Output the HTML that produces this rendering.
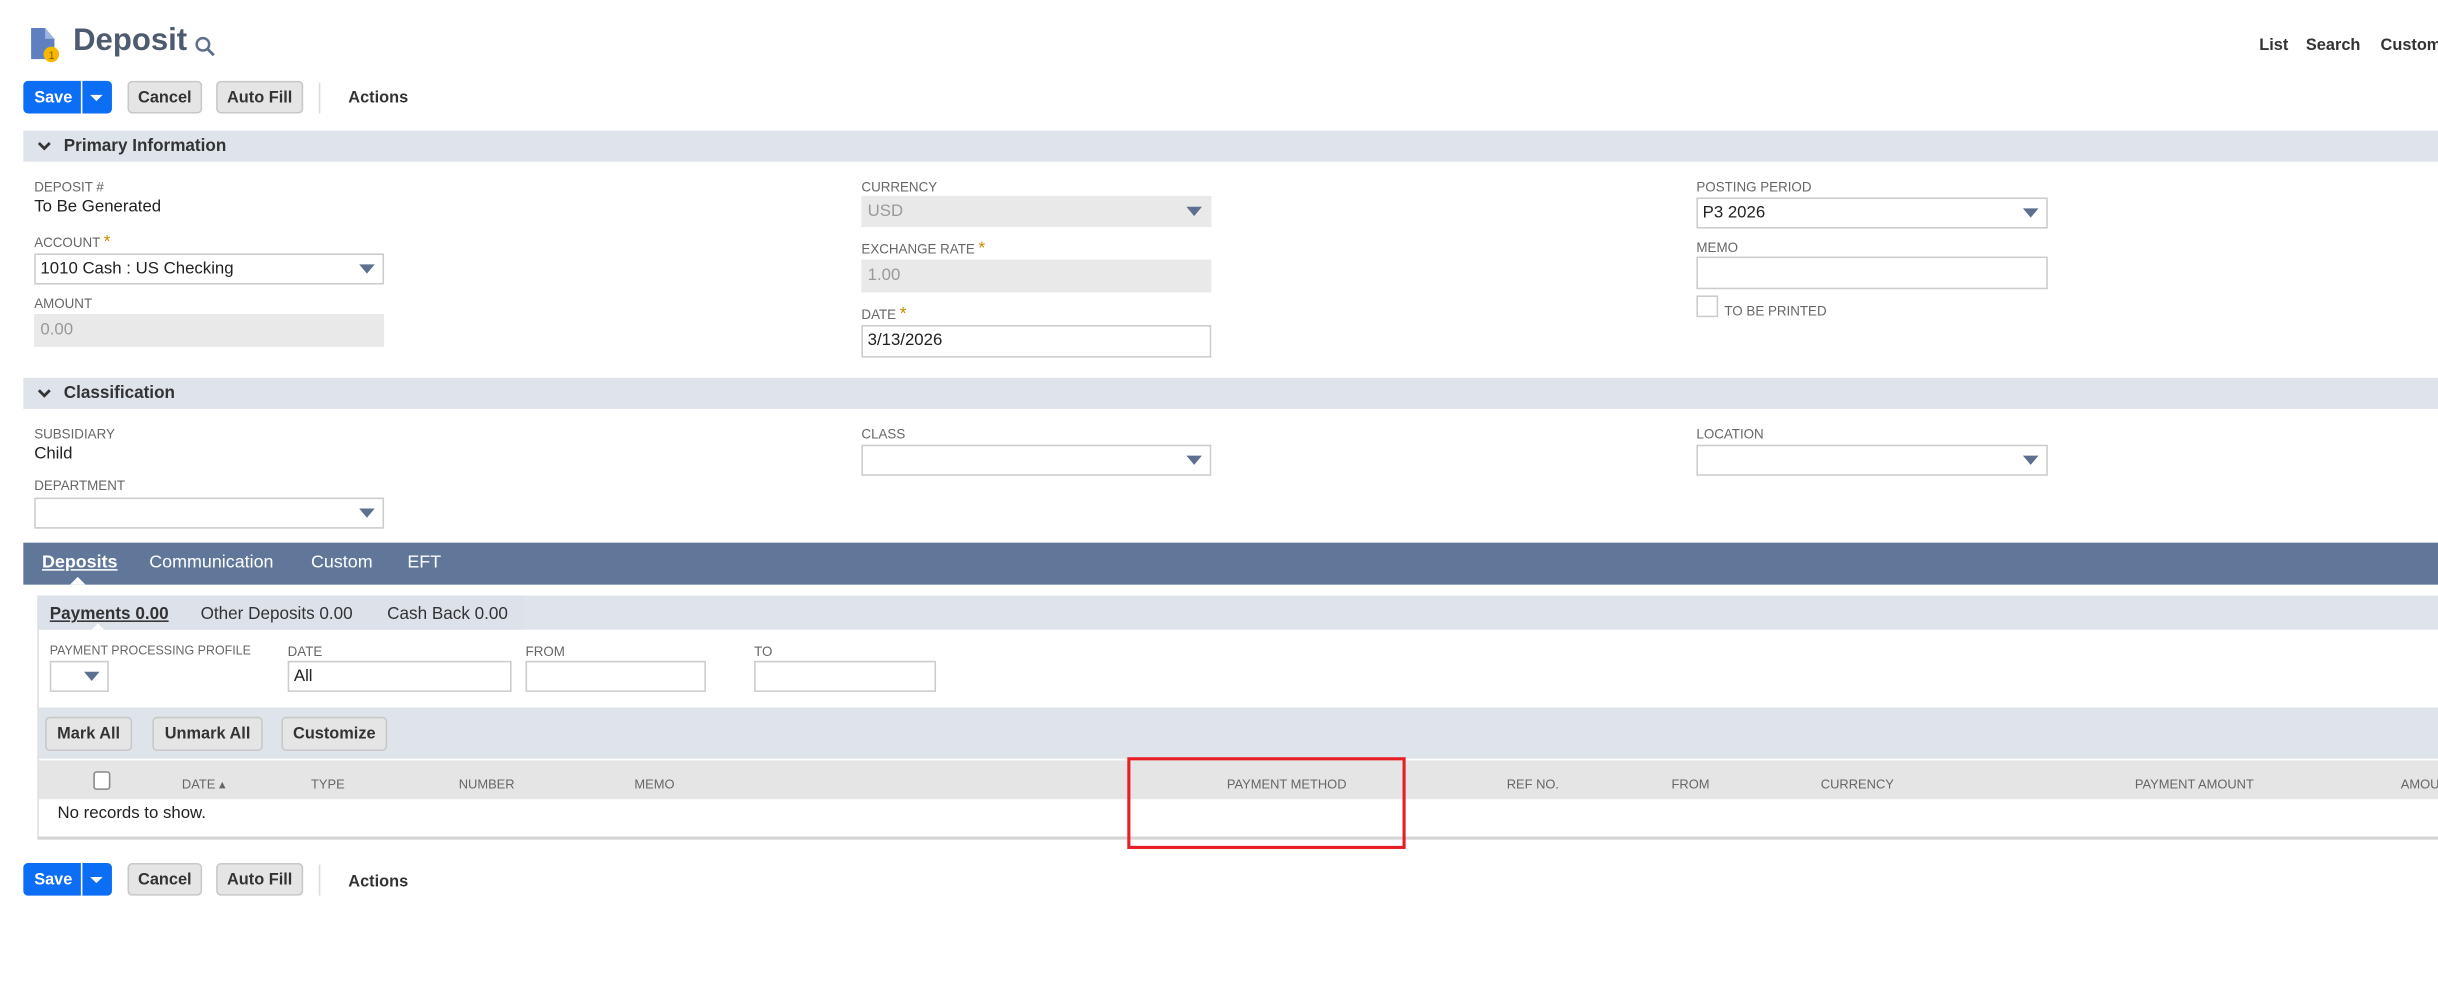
<!DOCTYPE html>
<html><head><meta charset="utf-8"><style>
html,body{margin:0;padding:0;background:#fff;overflow:hidden;width:2438px;height:998px}
#w{position:absolute;left:0;top:0;width:1568px;height:642px;transform:scale(1.5549);transform-origin:0 0;font-family:"Liberation Sans",sans-serif;color:#222}
.a{position:absolute;white-space:nowrap}
.lbl{font-size:8.6px;color:#666;text-transform:uppercase}
.val{font-size:10.8px;color:#222}
.box{position:absolute;border:1px solid #ccc;background:#fff;box-sizing:border-box;font-size:10.8px;line-height:18px;padding-left:3px}
.dis{background:#e9e9e9;border-color:#e9e9e9;color:#999}
.tri{position:absolute;right:5px;top:6px;width:0;height:0;border-left:5px solid transparent;border-right:5px solid transparent;border-top:6px solid #5e7090}
.star{color:#c88a00;font-size:11px}
.btn{position:absolute;height:21px;box-sizing:border-box;border:1px solid #c8c8c8;background:#e5e5e5;border-radius:3px;font-size:10.5px;font-weight:bold;color:#333;line-height:20px;text-align:center}
.save{position:absolute;height:21px;width:57px;background:#0c6df5;border-radius:3px;color:#fff;font-weight:bold;font-size:10.5px}
.bar{position:absolute;left:15px;right:0;height:20px;background:#dfe4eb;font-size:11px;font-weight:bold;color:#333;line-height:20px}
.hd{position:absolute;top:499px;font-size:8.3px;color:#666}
</style></head><body><div id="w">
<svg class="a" style="left:18px;top:16px" width="24" height="25" viewBox="0 0 24 25"><path d="M2 2h9l6 7v13H2z" fill="#5e80c0"/><path d="M11 2l6 7h-6z" fill="#9db4e0"/><circle cx="15" cy="19" r="5" fill="#f5b700"/><text x="13.3" y="22" font-size="7" fill="#8a5c00" font-family="Liberation Sans">1</text></svg>
<div class="a" style="left:47px;top:15px;font-size:20px;font-weight:bold;color:#4d5b70">Deposit</div>
<svg class="a" style="left:125px;top:23px" width="14" height="14" viewBox="0 0 14 14"><circle cx="5.5" cy="5.5" r="4" stroke="#5e6f8a" stroke-width="1.6" fill="none"/><path d="M8.5 8.5l4 4" stroke="#5e6f8a" stroke-width="1.8"/></svg>
<div class="a" style="left:1453px;top:23px;font-size:10.5px;font-weight:bold;color:#333">List</div>
<div class="a" style="left:1483px;top:23px;font-size:10.5px;font-weight:bold;color:#333">Search</div>
<div class="a" style="left:1531px;top:23px;font-size:10.5px;font-weight:bold;color:#333">Customize</div>
<div class="save" style="left:15px;top:52px"><span class="a" style="left:7px;top:5px">Save</span><span class="a" style="left:37px;top:0;width:1px;height:21px;background:#fff"></span><span class="a" style="left:43px;top:9px;border-left:4px solid transparent;border-right:4px solid transparent;border-top:4px solid #fff"></span></div>
<div class="btn" style="left:82px;top:52px;width:48px">Cancel</div>
<div class="btn" style="left:139px;top:52px;width:56px">Auto Fill</div>
<div class="a" style="left:205px;top:53px;width:1px;height:20px;background:#ddd"></div>
<div class="a" style="left:224px;top:57px;font-size:10.5px;font-weight:bold;color:#333">Actions</div>
<div class="bar" style="top:84px"><svg class="a" style="left:9px;top:7px" width="9" height="6"><path d="M1 1l3.5 3.5L8 1" stroke="#333" stroke-width="1.8" fill="none"/></svg><span class="a" style="left:26px">Primary Information</span></div>
<div class="a lbl" style="left:22px;top:115px">Deposit #</div>
<div class="a val" style="left:22px;top:127px">To Be Generated</div>
<div class="a lbl" style="left:22px;top:150px">Account <span class="star">*</span></div>
<div class="box" style="left:22px;top:163px;width:225px;height:20px">1010 Cash : US Checking<span class="tri"></span></div>
<div class="a lbl" style="left:22px;top:190px">Amount</div>
<div class="box dis" style="left:22px;top:202px;width:225px;height:21px">0.00</div>
<div class="a lbl" style="left:554px;top:115px">Currency</div>
<div class="box dis" style="left:554px;top:126px;width:225px;height:20px">USD<span class="tri"></span></div>
<div class="a lbl" style="left:554px;top:154px">Exchange Rate <span class="star">*</span></div>
<div class="box dis" style="left:554px;top:167px;width:225px;height:21px">1.00</div>
<div class="a lbl" style="left:554px;top:196px">Date <span class="star">*</span></div>
<div class="box" style="left:554px;top:209px;width:225px;height:21px">3/13/2026</div>
<div class="a lbl" style="left:1091px;top:115px">Posting Period</div>
<div class="box" style="left:1091px;top:127px;width:226px;height:20px">P3 2026<span class="tri"></span></div>
<div class="a lbl" style="left:1091px;top:154px">Memo</div>
<div class="box" style="left:1091px;top:165px;width:226px;height:21px"></div>
<div class="a" style="left:1091px;top:190px;width:14px;height:14px;border:1px solid #ccc;box-sizing:border-box"></div>
<div class="a lbl" style="left:1109px;top:195px">To Be Printed</div>
<div class="bar" style="top:243px"><svg class="a" style="left:9px;top:7px" width="9" height="6"><path d="M1 1l3.5 3.5L8 1" stroke="#333" stroke-width="1.8" fill="none"/></svg><span class="a" style="left:26px">Classification</span></div>
<div class="a lbl" style="left:22px;top:274px">Subsidiary</div>
<div class="a val" style="left:22px;top:286px">Child</div>
<div class="a lbl" style="left:22px;top:307px">Department</div>
<div class="box" style="left:22px;top:320px;width:225px;height:20px"><span class="tri"></span></div>
<div class="a lbl" style="left:554px;top:274px">Class</div>
<div class="box" style="left:554px;top:286px;width:225px;height:20px"><span class="tri"></span></div>
<div class="a lbl" style="left:1091px;top:274px">Location</div>
<div class="box" style="left:1091px;top:286px;width:226px;height:20px"><span class="tri"></span></div>
<div class="a" style="left:15px;top:349px;right:0;height:27px;background:#607799;color:#fff;font-size:11.5px;line-height:27px">
<span class="a" style="left:12px;font-weight:bold;text-decoration:underline">Deposits</span>
<span class="a" style="left:81px">Communication</span>
<span class="a" style="left:185px">Custom</span>
<span class="a" style="left:247px">EFT</span>
<span class="a" style="left:30px;top:22px;border-left:5px solid transparent;border-right:5px solid transparent;border-bottom:5px solid #fff"></span>
</div>
<div class="a" style="left:24px;top:383px;right:0;height:155px;border-left:1px solid #ddd;border-bottom:2px solid #d4d4d4"></div>
<div class="a" style="left:24px;top:383px;right:0;height:22px;background:#dfe4eb"></div>
<div class="a" style="left:24px;top:383px;width:313px;height:22px;background:#dde2ea;font-size:11px;line-height:24px;color:#333">
<span class="a" style="left:8px;font-weight:bold;text-decoration:underline">Payments 0.00</span>
<span class="a" style="left:105px">Other Deposits 0.00</span>
<span class="a" style="left:225px">Cash Back 0.00</span>
<span class="a" style="left:35px;top:18px;border-left:4px solid transparent;border-right:4px solid transparent;border-bottom:4px solid #fff"></span>
</div>
<div class="a lbl" style="left:32px;top:414px;font-size:8px">Payment Processing Profile</div>
<div class="a lbl" style="left:185px;top:414px">Date</div>
<div class="a lbl" style="left:338px;top:414px">From</div>
<div class="a lbl" style="left:485px;top:414px">To</div>
<div class="box" style="left:32px;top:425px;width:38px;height:20px"><span class="tri" style="right:5px"></span></div>
<div class="box" style="left:185px;top:425px;width:144px;height:20px">All</div>
<div class="box" style="left:338px;top:425px;width:116px;height:20px"></div>
<div class="box" style="left:485px;top:425px;width:117px;height:20px"></div>
<div class="a" style="left:25px;top:455px;right:0;height:33px;background:#dfe4eb"></div>
<div class="btn" style="left:29px;top:461px;width:56px;height:22px;line-height:21px">Mark All</div>
<div class="btn" style="left:98px;top:461px;width:71px;height:22px;line-height:21px">Unmark All</div>
<div class="btn" style="left:181px;top:461px;width:68px;height:22px;line-height:21px">Customize</div>
<div class="a" style="left:25px;top:489px;right:0;height:25px;background:#e5e5e5"></div>
<div class="a" style="left:60px;top:496px;width:9px;height:10px;border:1px solid #888;border-radius:2px;background:#fff"></div>
<div class="hd" style="left:117px">DATE ▴</div>
<div class="hd" style="left:200px">TYPE</div>
<div class="hd" style="left:295px">NUMBER</div>
<div class="hd" style="left:408px">MEMO</div>
<div class="hd" style="left:789px">PAYMENT METHOD</div>
<div class="hd" style="left:969px">REF NO.</div>
<div class="hd" style="left:1075px">FROM</div>
<div class="hd" style="left:1171px">CURRENCY</div>
<div class="hd" style="left:1373px">PAYMENT AMOUNT</div>
<div class="hd" style="left:1544px">AMOUNT</div>
<div class="a val" style="left:37px;top:517px">No records to show.</div>
<div class="a" style="left:725px;top:487px;width:179px;height:59px;border:2.5px solid #e81e25;box-sizing:border-box"></div>
<div class="save" style="left:15px;top:555px"><span class="a" style="left:7px;top:5px">Save</span><span class="a" style="left:37px;top:0;width:1px;height:21px;background:#fff"></span><span class="a" style="left:43px;top:9px;border-left:4px solid transparent;border-right:4px solid transparent;border-top:4px solid #fff"></span></div>
<div class="btn" style="left:82px;top:555px;width:48px">Cancel</div>
<div class="btn" style="left:139px;top:555px;width:56px">Auto Fill</div>
<div class="a" style="left:205px;top:556px;width:1px;height:20px;background:#ddd"></div>
<div class="a" style="left:224px;top:561px;font-size:10.5px;font-weight:bold;color:#333">Actions</div>
</div></body></html>
